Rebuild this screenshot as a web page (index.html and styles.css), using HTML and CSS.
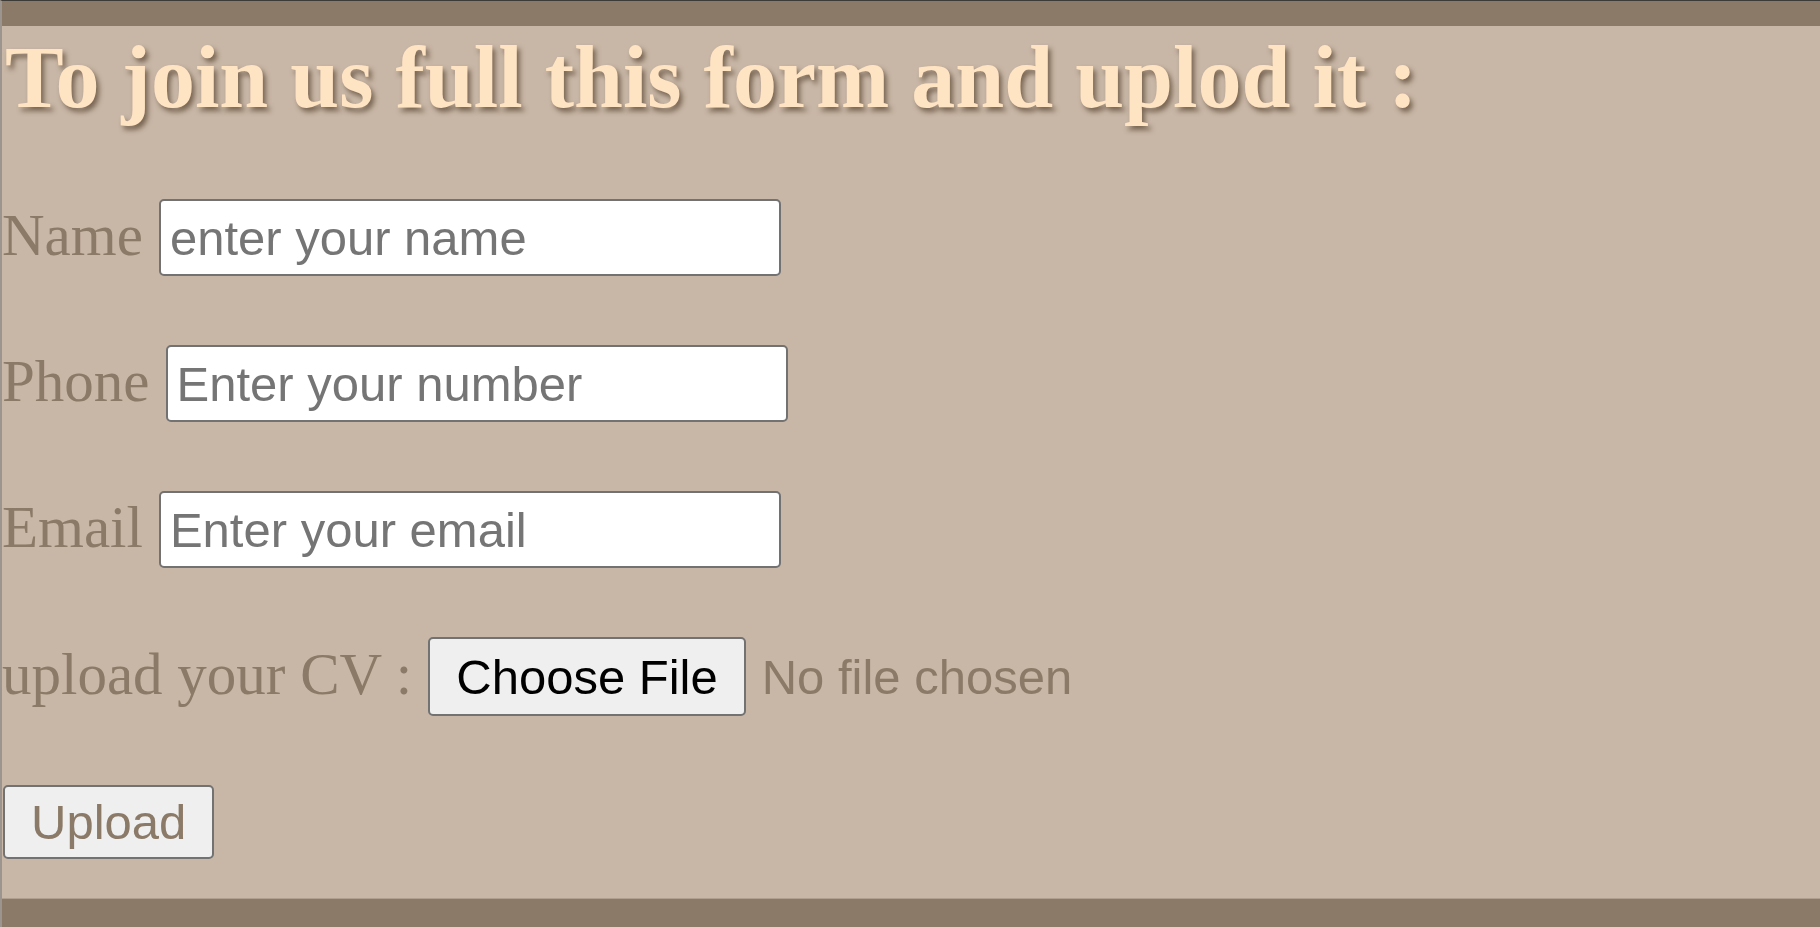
FILE: index.html
```html
<!DOCTYPE html>
<html lang="en">
<head>
<meta charset="utf-8">
<title>Join us</title>
<link rel="stylesheet" href="styles.css">
</head>
<body>
<div class="page">
  <div class="bar top-bar"></div>
  <main class="content">
    <h1 class="title">To join us full this form and uplod it :</h1>
    <form class="form">
      <div class="row">
        <label class="label" for="name">Name</label>
        <input class="field" id="name" type="text" placeholder="enter your name">
      </div>
      <div class="row">
        <label class="label" for="phone">Phone</label>
        <input class="field" id="phone" type="text" placeholder="Enter your number">
      </div>
      <div class="row">
        <label class="label" for="email">Email</label>
        <input class="field" id="email" type="email" placeholder="Enter your email">
      </div>
      <div class="row">
        <label class="label" for="cv">upload your CV :</label>
        <input class="file" id="cv" type="file">
      </div>
      <div class="row">
        <button class="submit" type="button">Upload</button>
      </div>
    </form>
  </main>
  <div class="bar bottom-bar"></div>
</div>
</body>
</html>
```

FILE: styles.css
```css
html, body {
  margin: 0;
  padding: 0;
}

body {
  background: #c8b6a6;
}

.page {
  height: 927px;
  box-sizing: border-box;
  border-top: 1px solid #3d3b38;
  border-left: 2px solid #9c958f;
  display: flex;
  flex-direction: column;
  background: #c8b6a6;
  overflow: hidden;
}

.bar {
  background: #8b7a67;
  flex: none;
}

.top-bar {
  height: 25px;
}

.bottom-bar {
  height: 29px;
  border-top: 1px solid #b09f8f;
  box-sizing: border-box;
}

.content {
  flex: 1;
}

.title {
  margin: 4px 0 0 3px;
  font-family: "Liberation Serif", "Times New Roman", serif;
  font-weight: bold;
  font-size: 88px;
  line-height: 96px;
  color: #ffe4c4;
  text-shadow: 3px 4px 5px rgba(95, 75, 55, 0.75);
  white-space: nowrap;
}

.form {
  margin-top: 73px;
  display: flex;
  flex-direction: column;
  gap: 69px;
}

.row {
  display: flex;
  align-items: baseline;
  gap: 16px;
}

.label {
  font-family: "Liberation Serif", "Times New Roman", serif;
  font-size: 59px;
  color: #8b7a67;
  white-space: nowrap;
}

.field {
  box-sizing: border-box;
  width: 622px;
  height: 77px;
  margin: 0;
  padding: 8px 9px;
  font-family: "Liberation Sans", Arial, sans-serif;
  font-size: 49px;
  color: #222;
  background: #fff;
  border: 2px solid #727272;
  border-radius: 5px;
  outline: none;
}

.field::placeholder {
  color: #757575;
}

.file {
  margin: 0;
  font-family: "Liberation Sans", Arial, sans-serif;
  font-size: 49px;
  color: #8b7a67;
}

.file::file-selector-button {
  box-sizing: border-box;
  height: 79px;
  margin: 0 16px 0 0;
  padding: 0 26px;
  font-family: "Liberation Sans", Arial, sans-serif;
  font-size: 49px;
  color: #000;
  background: #efefef;
  border: 2px solid #727272;
  border-radius: 5px;
}

.submit {
  box-sizing: border-box;
  height: 74px;
  margin: 0 0 0 1px;
  padding: 0 26px;
  font-family: "Liberation Sans", Arial, sans-serif;
  font-size: 49px;
  color: #8b7a67;
  background: #efefef;
  border: 2px solid #727272;
  border-radius: 5px;
}
```
